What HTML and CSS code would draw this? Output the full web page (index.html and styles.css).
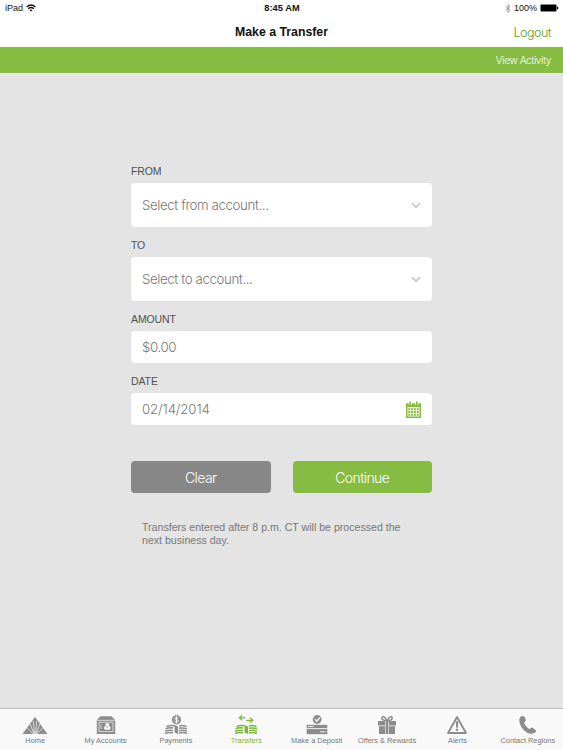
FILE: index.html
```html
<!DOCTYPE html>
<html lang="en">
<head>
    <meta charset="UTF-8">
    <meta name="viewport" content="width=device-width, initial-scale=1.0">
    <title>Make a Transfer</title>
    <link rel="stylesheet" href="styles.css">
</head>
<body>
    <div class="status-bar">
        <div class="carrier">
            <span>iPad</span>
            <svg width="10" height="8" viewBox="0 0 10 8" fill="none" stroke="#111" stroke-width="1.3">
                <path d="M.6 3Q5-1 9.4 3M2.2 4.8Q5 2.3 7.8 4.8"/>
                <path d="M5 7.6L3.4 6Q5 4.8 6.6 6z" fill="#111" stroke="none"/>
            </svg>
        </div>
        <div class="clock">8:45 AM</div>
        <div class="battery">
            <svg class="bluetooth" width="6" height="9" viewBox="0 0 6 9" fill="none" stroke="#888" stroke-width=".8">
                <path d="M.7 2.4L5 6.4 3 8.4V.6L5 2.5.7 6.5"/>
            </svg>
            <span>100%</span>
            <svg width="19" height="8" viewBox="0 0 19 8">
                <rect x=".5" y=".6" width="16" height="6.8" rx="1"/>
                <path d="M17 2.6q1.3.2 1.3 1.4T17 5.4z"/>
            </svg>
        </div>
    </div>

    <header class="title-bar">
        <h1>Make a Transfer</h1>
        <a class="logout">Logout</a>
    </header>
    <nav class="sub-bar"><a>View Activity</a></nav>

    <main class="content">
        <form class="transfer-form">
            <label class="from">FROM</label>
            <div class="field select">
                <span>Select from account...</span>
                <svg width="10" height="7" viewBox="0 0 10 7" fill="none" stroke="#c6c6c6" stroke-width="1.7"><path d="M.8 1L5 5.2 9.2 1"/></svg>
            </div>
            <label class="to">TO</label>
            <div class="field select">
                <span>Select to account...</span>
                <svg width="10" height="7" viewBox="0 0 10 7" fill="none" stroke="#c6c6c6" stroke-width="1.7"><path d="M.8 1L5 5.2 9.2 1"/></svg>
            </div>
            <label class="amount">AMOUNT</label>
            <div class="field"><span>$0.00</span></div>
            <label class="date">DATE</label>
            <div class="field">
                <span class="date-value">02/14/2014</span>
                <svg class="calendar" width="15" height="17" viewBox="0 0 15 17">
                    <path fill="#86bc41" d="M0 2.200h15V17H0zM1.500 6v9.600h12V6z" fill-rule="evenodd"/>
                    <path stroke="#fff" stroke-width="3" d="M4.200 0v4M10.800 0v4"/>
                    <path stroke="#86bc41" stroke-width="1.700" stroke-linecap="round" d="M4.200 1.200v2.200M10.800 1.200v2.200"/>
                    <path stroke="#86bc41" stroke-width="2" stroke-dasharray="2 .8" d="M2.300 8.200h11M2.300 11h11M2.300 13.800h11"/>
                </svg>
            </div>
            <div class="buttons">
                <button type="button" class="clear"><span>Clear</span></button>
                <button type="button" class="continue"><span>Continue</span></button>
            </div>
            <p class="note">Transfers entered after 8 p.m. CT will be processed the<br>next business day.</p>
        </form>
    </main>

    <footer class="tab-bar">
        <a class="tab home">
            <svg width="26" height="20" viewBox="0 0 26 20">
                <path fill="currentColor" d="M13 2L25.5 19H.5z"/>
                <path stroke="#f9f9f9" stroke-width=".7" d="M11.500 19L5.200 13M12 19L8.200 9M12.500 19L11.300 6M13.500 19l1.200-13M14 19l3.800-10M14.500 19l6.300-6"/>
            </svg>
            <span>Home</span>
        </a>
        <a class="tab accounts">
            <svg width="20" height="20" viewBox="0 0 20 20">
                <path fill="currentColor" d="M.8 5L4.5 1.2h11L19.2 5v14H.8z"/>
                <path fill="none" stroke="#f9f9f9" stroke-width=".7" d="M1 5.300h18M3 7.200h14v9.400H3zM5 9.500v4.500"/>
                <path fill="#f9f9f9" d="M11.300 8a1.900 1.900 0 0 1 1.500 3.100 1.900 1.900 0 1 1-1.500 3.200 1.900 1.900 0 1 1-1.500-3.200A1.900 1.900 0 0 1 11.300 8z"/>
                <circle cx="11.300" cy="12" r=".8" fill="currentColor"/>
            </svg>
            <span>My Accounts</span>
        </a>
        <a class="tab payments">
            <svg width="24" height="20" viewBox="0 0 24 20">
                <circle cx="12.500" cy="4.800" r="4.600" fill="currentColor"/>
                <path fill="none" stroke="#f9f9f9" stroke-width="1" d="M14.400 3.300Q13.800 2.500 12.500 2.500C10 2.500 10 4.800 12.500 4.800S15 7.100 12.500 7.100Q11 7.100 10.500 6.200M12.500 1.300v7"/>
                <path fill="none" stroke="currentColor" stroke-width="1.500" d="M2.500 11.500q4-1.500 8-.7M1.500 13.800q4-1.500 7.500-.7M1.200 16.200q4-1.500 7.800-.7M1 18.500q4-1.500 8-.7M15 11q4-1 7.500.6M15 13.300q4-1 7.800.5M15 15.700q4-1 8 .5M15 18q4-1 8 .5"/>
                <path fill="currentColor" d="M9.600 10q3.500.6 4.500 1.700V19q-1.500-1-3.500-1.200V12z"/>
            </svg>
            <span>Payments</span>
        </a>
        <a class="tab transfers active">
            <svg width="24" height="20" viewBox="0 0 24 20">
                <path fill="none" stroke="currentColor" stroke-width="1.200" d="M8.200.2L5.300 2.800l2.900 2.600M5.500 2.800h6M16 2.700l2.900 2.600L16 7.900M18.700 5.300h-6.500"/>
                <path fill="none" stroke="currentColor" stroke-width="1.500" d="M2.500 11.500q4-1.500 8-.7M1.500 13.800q4-1.500 7.500-.7M1.200 16.200q4-1.500 7.800-.7M1 18.500q4-1.500 8-.7M15 11q4-1 7.500.6M15 13.300q4-1 7.800.5M15 15.700q4-1 8 .5M15 18q4-1 8 .5"/>
                <path fill="currentColor" d="M9.600 10q3.500.6 4.500 1.700V19q-1.500-1-3.500-1.200V12z"/>
            </svg>
            <span>Transfers</span>
        </a>
        <a class="tab deposit">
            <svg width="22" height="20" viewBox="0 0 22 20">
                <path fill="currentColor" d="M.7 9.800h20.600v9.400H.7z"/>
                <path stroke="#f9f9f9" stroke-width=".9" d="M2 11.500h5.500M.7 13.600h20.600M14 16.800h5.500"/>
                <circle cx="11.200" cy="4.500" r="4.400" fill="currentColor"/>
                <path fill="none" stroke="#f9f9f9" stroke-width="1.300" d="M9 4.300l1.800 1.900L13.700 2.600"/>
            </svg>
            <span>Make a Deposit</span>
        </a>
        <a class="tab offers">
            <svg width="20" height="20" viewBox="0 0 20 20">
                <path fill="currentColor" d="M1 6h7v4.500H1zM8.600 6h2.800v13H8.600zM12 6h7v4.500h-7zM2 11.300h6V19H2zM12 11.300h6V19h-6z"/>
                <path fill="none" stroke="currentColor" stroke-width="1.500" d="M9.600 5.500C8 .9 5 .8 4.800 3.200 4.800 5 7 5.400 9.600 5.500zM10.400 5.500C12 .9 15 .8 15.200 3.200c0 1.800-2.200 2.200-4.800 2.300z"/>
            </svg>
            <span>Offers &amp; Rewards</span>
        </a>
        <a class="tab alerts">
            <svg width="22" height="20" viewBox="0 0 22 20">
                <path fill="none" stroke="currentColor" stroke-width="1.800" stroke-linejoin="round" d="M11 2L20 18H2z"/>
                <path fill="currentColor" d="M9.700 6.200h2.600l-.5 6.500h-1.600z"/>
                <circle cx="11" cy="14.800" r="1.200" fill="currentColor"/>
            </svg>
            <span>Alerts</span>
        </a>
        <a class="tab contact">
            <svg width="20" height="20" viewBox="0 0 20 20">
                <path fill="currentColor" d="M3 1.500C4.600.5 6 .8 6.600 2l1.100 2.400c.5 1.200-.1 1.700-1.700 2.800-.3 1.600 4 6.900 5.600 6.900 1.500-1.200 2.200-1.600 3.200-1l2.500 1.600c1 .7.800 2-.3 2.900-3.700 2.700-8.500.8-11.700-3C1.900 10.600-.4 4.200 3 1.500z"/>
            </svg>
            <span>Contact Regions</span>
        </a>
    </footer>
</body>
</html>
```

FILE: styles.css
```css
* {
    box-sizing: border-box;
}
body {
    font-family: "Liberation Sans", Arial, sans-serif;
    background-color: #e4e4e4;
    margin: 0;
    height: 750px;
    display: flex;
    flex-direction: column;
    overflow: hidden;
}
svg {
    display: block;
    flex: none;
}
.status-bar {
    height: 16px;
    background: white;
    display: grid;
    grid-template-columns: 1fr auto 1fr;
    align-items: center;
    padding: 0 4px 0 5px;
    font-size: 9px;
    line-height: 16px;
    color: #111;
}
.carrier, .battery {
    display: flex;
    align-items: center;
    gap: 4px;
}
.carrier {
    gap: 3px;
}
.battery {
    justify-content: flex-end;
    gap: 3px;
}
.clock {
    font-weight: bold;
    font-size: 9.3px;
}
.title-bar {
    height: 31px;
    background: white;
    display: grid;
    grid-template-columns: 1fr auto 1fr;
    align-items: center;
    padding: 0 12px;
}
h1 {
    grid-column: 2;
    margin: 0;
    font-size: 12.3px;
    line-height: 32px;
    color: #111;
}
.logout {
    justify-self: end;
    font-family: Inter, sans-serif;
    font-weight: 300;
    font-size: 12.5px;
    letter-spacing: -0.5px;
    color: #609b2f;
}
.sub-bar {
    height: 26px;
    background: #86bc41;
    padding-right: 12px;
    text-align: right;
    font-family: Inter, sans-serif;
    font-weight: 300;
    font-size: 10.2px;
    letter-spacing: -0.45px;
    line-height: 26px;
    color: white;
}
.content {
    flex: 1;
}
.transfer-form {
    width: 301px;
    margin: 92px 0 0 131px;
}
label {
    display: block;
    height: 18px;
    margin-top: 12px;
    font-size: 10.5px;
    line-height: 13px;
    letter-spacing: -0.1px;
    color: #505050;
}
.field {
    height: 32px;
    padding: 0 11px;
    background: white;
    border-radius: 4px;
    display: flex;
    align-items: center;
    justify-content: space-between;
    font-family: Inter, sans-serif;
    font-weight: 300;
    font-size: 13.3px;
    letter-spacing: -0.4px;
    line-height: 16px;
    color: #777;
}
.select {
    height: 44px;
}
.date-value {
    letter-spacing: -0.15px;
}
.buttons {
    display: flex;
    gap: 22px;
    margin-top: 36px;
}
button {
    flex: 1;
    height: 32px;
    padding: 0;
    border: none;
    border-radius: 4px;
    color: white;
    font-family: Inter, sans-serif;
    font-weight: 300;
    font-size: 14px;
    letter-spacing: -0.6px;
}
.clear {
    background: #878787;
}
.continue {
    background: #86bc41;
}
.note {
    margin: 28px 0 0 11px;
    font-size: 10.6px;
    line-height: 13px;
    color: #777;
    white-space: nowrap;
}
.tab-bar {
    height: 42px;
    background: #f9f9f9;
    border-top: 1px solid #bdbdbd;
    display: grid;
    grid-template-columns: repeat(8, 1fr);
    color: #8c8c8c;
}
.tab {
    display: flex;
    flex-direction: column;
    align-items: center;
    padding-top: 6px;
    font-size: 7.4px;
    line-height: 12px;
    white-space: nowrap;
}
.tab span {
    color: #777;
}
.active, .active span {
    color: #7ab83a;
}
```
